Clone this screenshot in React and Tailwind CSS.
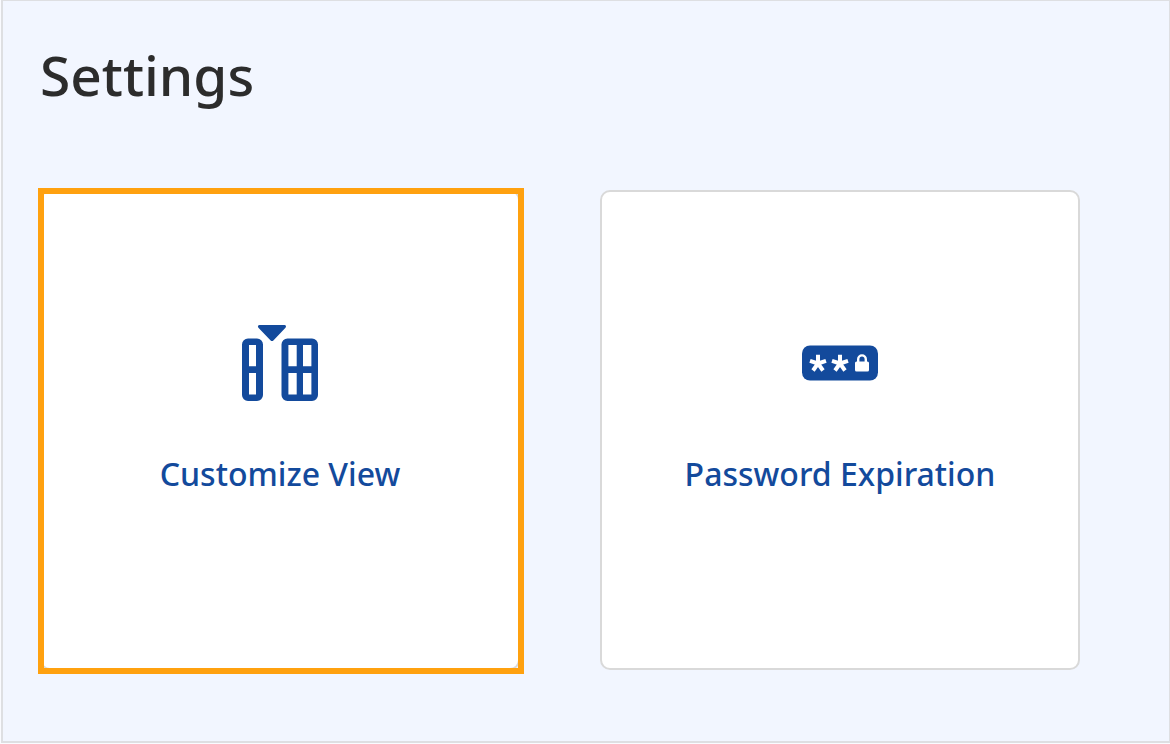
function ColumnsIcon() {
  return (
    <svg viewBox="0 0 76 76" className="size-19" fill="currentColor" aria-hidden="true">
      <path d="M17.5 0h25c1.5 0 2 1.6 1 2.7L31.6 15.2a2.2 2.2 0 0 1-3.2 0L16.4 2.7C15.4 1.6 16 0 17.5 0Z" />
      <path
        fillRule="evenodd"
        d="M6 13.4h9a6 6 0 0 1 6 6V70a6 6 0 0 1-6 6H6a6 6 0 0 1-6-6V19.4a6 6 0 0 1 6-6ZM7 20v21.2h7V20ZM7 48v21.5h7V48Z"
      />
      <path
        fillRule="evenodd"
        d="M45.5 13.4H70a6 6 0 0 1 6 6V70a6 6 0 0 1-6 6H45.5a6 6 0 0 1-6-6V19.4a6 6 0 0 1 6-6ZM46.4 20v21.2h8.3V20ZM61 20v21.2h8.4V20ZM46.4 48v21.5h8.3V48ZM61 48v21.5h8.4V48Z"
      />
    </svg>
  );
}

function PasswordIcon() {
  return (
    <svg viewBox="0 0 76 76" className="size-19" aria-hidden="true">
      <rect y="20.5" width="76" height="35" rx="8" fill="currentColor" />
      <g stroke="#fff" strokeWidth="4">
        <path d="M16 38.5V29.8M16 38.5l-8-2.6M16 38.5l8-2.6M16 38.5l-5 7M16 38.5l5 7" />
        <path d="M38 38.5V29.8M38 38.5l-8-2.6M38 38.5l8-2.6M38 38.5l-5 7M38 38.5l5 7" />
      </g>
      <rect x="53" y="36.4" width="14" height="10.2" rx="1.6" fill="#fff" />
      <path d="M56.2 37v-2.8a3.8 3.8 0 0 1 7.6 0V37" fill="none" stroke="#fff" strokeWidth="2.4" />
    </svg>
  );
}

function SettingsCard({ icon, label, highlighted }) {
  return (
    <div className="relative">
      <a
        href="#"
        className="flex aspect-square flex-col items-center gap-[53px] rounded-[10px] border-2 border-[#d9d9d9] bg-white pt-[133px] text-[#134a9c]"
      >
        {icon}
        <span className="text-center text-[32px] leading-10 font-medium">{label}</span>
      </a>
      {highlighted && (
        <div className="pointer-events-none absolute -top-0.5 -right-1 -bottom-1 -left-0.5 border-6 border-[#ffa10f]" />
      )}
    </div>
  );
}

export default function App() {
  return (
    <div className="min-h-screen bg-[#fafbff] pb-px pl-px font-['Noto_Sans',sans-serif]">
      <main className="min-h-[calc(100vh-1px)] border-t border-r border-b-2 border-l-2 border-[#dedfe2] bg-[#f2f6ff] pt-[38px] pr-[89px] pb-[71px] pl-[37px]">
        <h1 className="text-[55px] leading-[72px] font-medium text-[#2c2c2c]">Settings</h1>
        <div className="mt-[79px] grid grid-cols-2 gap-20">
          <SettingsCard icon={<ColumnsIcon />} label="Customize View" highlighted />
          <SettingsCard icon={<PasswordIcon />} label="Password Expiration" />
        </div>
      </main>
    </div>
  );
}
